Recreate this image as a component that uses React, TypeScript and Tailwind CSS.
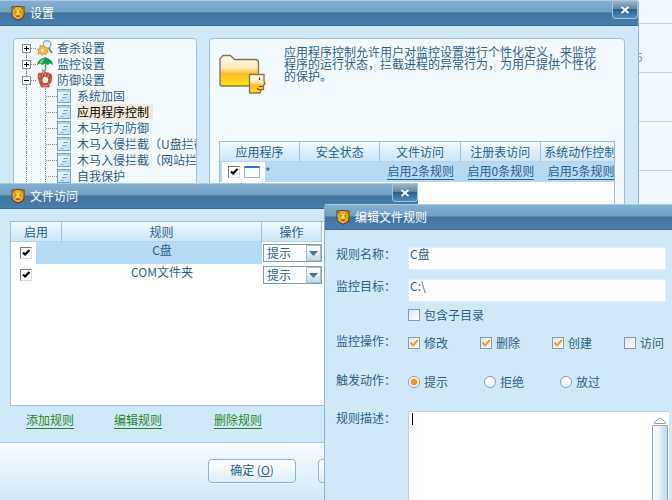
import type { ReactNode } from "react";

const treeGroups = [
  { label: "查杀设置", icon: "scan", open: false },
  { label: "监控设置", icon: "umbrella", open: false },
  { label: "防御设置", icon: "glove", open: true },
];

const defenseItems = [
  "系统加固",
  "应用程序控制",
  "木马行为防御",
  "木马入侵拦截（U盘拦截）",
  "木马入侵拦截（网站拦截）",
  "自我保护",
  "漏洞防护",
];

const appColumns = ["应用程序", "安全状态", "文件访问", "注册表访问", "系统动作控制"];

const fileRules = [
  { id: "c", name: "C盘", selected: true },
  { id: "com", name: "COM文件夹", selected: false },
];

const operations = [
  { label: "修改", checked: true },
  { label: "删除", checked: true },
  { label: "创建", checked: true },
  { label: "访问", checked: false },
];

const actions = ["提示", "拒绝", "放过"];

function Shield() {
  return (
    <svg className="h-4 w-4 shrink-0" viewBox="0 0 16 16" aria-hidden="true">
      <path d="M1.500 1.500Q5 1.800 8 .8Q11 1.800 14.500 1.500V10Q14 13.500 8 15.700Q2 13.500 1.500 10Z" fill="#54422a" />
      <path d="M2.500 2.500Q5.500 2.800 8 1.800Q10.500 2.800 13.500 2.500V9.800Q13 12.700 8 14.600Q3 12.700 2.500 9.800Z" fill="#f5ae1e" />
      <path d="M3 3L5.200 3.500L3.800 5.500ZM13 3L10.800 3.500L12.200 5.500Z" fill="#c2560e" />
      <path d="M4.500 6L6.800 7L5.500 7.800ZM11.500 6L9.200 7L10.500 7.800Z" fill="#8a3c06" />
      <path d="M7 5H9L9.500 9.500H6.500Z" fill="#ffe46e" />
      <path d="M5.500 10.500H10.500L9.500 12H6.500Z" fill="#b04a0a" />
      <path d="M3.200 8.500L4.800 9.500M12.800 8.500L11.200 9.500" stroke="#c2560e" strokeWidth=".8" />
    </svg>
  );
}

function GroupIcon({ name }: { name: string }) {
  if (name === "scan") {
    return (
      <svg className="h-4 w-4 shrink-0" viewBox="0 0 16 16" aria-hidden="true">
        <path d="M11.500 8L15 13" stroke="#5b86b5" strokeWidth="2" />
        <circle cx="10" cy="4.500" r="3.800" fill="#dceffc" stroke="#86a9c9" strokeWidth="1.300" />
        <path d="M3 5.500L5.500 6L7 5.500L8.500 7.500L10.500 8L10 10L11.500 12L9.500 13L8.800 15L6.500 14.300L4.500 15.500L3.500 13.700L.8 14L1.500 11.500L.3 9.500L2.800 8.500Z" fill="#fbb43c" stroke="#e0862a" strokeWidth=".7" />
        <circle cx="5.500" cy="10.500" r="1.800" fill="#ffe9b0" />
      </svg>
    );
  }
  if (name === "umbrella") {
    return (
      <svg className="h-4 w-4 shrink-0" viewBox="0 0 16 16" aria-hidden="true">
        <path d="M8.500 1V13.500Q8.500 15.200 7 15.200Q5.500 15.200 5.500 13.500" fill="none" stroke="#6b8a7c" strokeWidth="1.400" />
        <path d="M0 9Q.5 3 8 1.500Q15.500 3 16 9L13 7.500L10.800 9L8 7.500L5.200 9L3 7.500Z" fill="#159c52" />
        <path d="M5 7.500Q5.500 3.800 8 2.200Q4 3.200 2.300 7Z" fill="#72d89c" />
      </svg>
    );
  }
  return (
    <svg className="h-4 w-4 shrink-0" viewBox="0 0 16 16" aria-hidden="true">
      <path d="M1.200 2Q2.500 .5 4 1.500Q5 0 6.700 1Q8.300 -.3 9.800 1Q11.500 0 12.500 1.800Q14.500 1.500 14.800 3.500L14.500 9Q13.500 11.500 12 12L12.300 15H4.500Q1.800 10 1.200 6Z" fill="#cc5238" stroke="#9a3b28" strokeWidth=".6" />
      <path d="M4 2V7M6.700 1.500V5M9.800 1.500V5M12.500 2.500V6.500" stroke="#8a2f20" strokeWidth=".7" />
      <path d="M3 2.500V6M5.500 1.800V4.500M8.300 1.500V4M11.200 2V5" stroke="#f0a08a" strokeWidth=".8" />
      <ellipse cx="8.300" cy="8" rx="2.800" ry="3.300" fill="#fff8f2" />
      <path d="M5.500 13.700H11.300" stroke="#f0a08a" strokeWidth=".8" />
    </svg>
  );
}

function PageIcon() {
  return (
    <svg className="h-3.5 w-3.5 shrink-0" viewBox="0 0 14 14" aria-hidden="true">
      <rect x=".5" y=".5" width="13" height="13" fill="#e3f2fc" stroke="#6aa8d2" />
      <path d="M1 2H13" stroke="#a5d0ec" strokeWidth="2" />
      <path d="M6.500 5.500H11M5 8.500H9.500" stroke="#5b9cca" />
      <path d="M3 11.500H7" stroke="#8dbde0" />
      <path d="M1 13L13 5V13Z" fill="#a8d2ee" opacity=".5" />
    </svg>
  );
}

function FolderIcon() {
  return (
    <svg className="h-[42px] w-12 shrink-0" viewBox="0 0 48 42" aria-hidden="true">
      <defs>
        <linearGradient id="folder" x1="0" y1="0" x2="0" y2="1">
          <stop offset="0" stopColor="#fffdf6" />
          <stop offset=".4" stopColor="#ffe9b8" />
          <stop offset=".6" stopColor="#fdbb2a" />
          <stop offset="1" stopColor="#ffe60c" />
        </linearGradient>
      </defs>
      <path d="M1 5L4 1.500H11.500L15.500 5.500H36Q39.500 5.500 39.500 9V30Q39.500 32 37.500 32H3Q1 32 1 30Z" fill="url(#folder)" stroke="#85714f" strokeWidth="1.300" />
      <path d="M30.500 20.500H45V27L46 30L44.500 31V35.500H42.500L41 39H30.500Z" fill="url(#folder)" stroke="#85714f" strokeWidth="1.300" />
      <path d="M40.500 23.500V26M43.500 32.500H40M41.500 35.500Q39 36 38 34" fill="none" stroke="#5f3e10" strokeWidth="1.200" />
    </svg>
  );
}

function TitleBar({ title, closable = false }: { title: string; closable?: boolean }) {
  return (
    <header className="flex h-[26px] shrink-0 items-center justify-between border-t border-b border-t-[#a9cae1] border-b-[#356792] bg-[linear-gradient(#82b0d0,#6fa1c5_45%,#42739f_50%,#477fae)] pl-2.5">
      <h2 className="flex items-center gap-1 text-white">
        <Shield />
        {title}
      </h2>
      {closable && (
        <button type="button" aria-label="关闭" className="flex h-[18px] w-[26px] items-center justify-center self-start rounded-b border border-t-0 border-[#9cc4df] bg-[linear-gradient(#9fb5c6,#6386a3_45%,#2d5f8c_50%,#4a90bd)]">
          <svg className="h-2 w-2" viewBox="0 0 8 8" aria-hidden="true">
            <path d="M.5 1L7.500 7M7.500 1L.5 7" stroke="white" strokeWidth="1.800" />
          </svg>
        </button>
      )}
    </header>
  );
}

function TableCheckbox({ label }: { label: string }) {
  return (
    <span className="grid h-3 w-3">
      <input type="checkbox" defaultChecked aria-label={label} className="peer col-start-1 row-start-1 h-3 w-3 appearance-none border border-t-[#777] border-r-[#ddd] border-b-[#ddd] border-l-[#777] bg-white" />
      <svg className="pointer-events-none invisible col-start-1 row-start-1 h-3 w-3 peer-checked:visible" viewBox="0 0 12 12" aria-hidden="true">
        <path d="M3 5.500L5 7.500L9.500 3" fill="none" stroke="black" strokeWidth="2.200" />
      </svg>
    </span>
  );
}

function CheckOption({ label, checked = false }: { label: string; checked?: boolean }) {
  return (
    <label className="flex items-center gap-1">
      <span className="grid h-3 w-3">
        <input type="checkbox" defaultChecked={checked} className="peer col-start-1 row-start-1 h-3 w-3 appearance-none border border-[#7d9cc0] bg-linear-to-br from-[#dfe6ec] to-white" />
        <svg className="pointer-events-none invisible col-start-1 row-start-1 h-3 w-3 peer-checked:visible" viewBox="0 0 12 12" aria-hidden="true">
          <path d="M2.500 5.500L5 8.500L10 3" fill="none" stroke="#f0a020" strokeWidth="2" />
        </svg>
      </span>
      {label}
    </label>
  );
}

function HeadCell({ children, width }: { children?: ReactNode; width: string }) {
  return (
    <th scope="col" className={`${width} h-5 border-r border-b border-r-[#9fc3dd] border-b-[#b4d6ec] bg-[linear-gradient(#f1f9fe,#ddeffb_50%,#cde6f7)] p-0 font-normal whitespace-nowrap`}>
      {children}
    </th>
  );
}

function SettingsWindow() {
  return (
    <section className="absolute top-0 right-[33px] bottom-0 left-0 flex flex-col rounded-t border-r border-[#8fb3cf] bg-[#d1e8f8]">
      <TitleBar title="设置" closable />
      <div className="flex flex-1 gap-3 px-[13px] pt-3">
        <nav className="w-[184px] shrink-0 overflow-hidden rounded-t border border-[#9dbfd9] bg-[#f3fafe] pt-px pl-2">
          <ul>
            {treeGroups.map((group, i) => (
              <li key={group.label} className="flex h-4 items-center">
                <span className="flex h-4 flex-col items-center">
                  <span className={`w-px flex-1 ${i > 0 ? "border-l border-dotted border-[#888]" : ""}`} />
                  <button type="button" aria-label={group.label} aria-expanded={group.open} className="flex h-[9px] w-[9px] items-center justify-center border border-[#8a9199] bg-white">
                    <svg className="h-[5px] w-[5px]" viewBox="0 0 5 5" aria-hidden="true">
                      <path d={group.open ? "M0 2.500H5" : "M0 2.500H5M2.500 0V5"} stroke="black" />
                    </svg>
                  </button>
                  <span className="w-px flex-1 border-l border-dotted border-[#888]" />
                </span>
                <span className="mr-px w-[5px] border-t border-dotted border-[#888]" />
                <GroupIcon name={group.icon} />
                <span className="ml-1 whitespace-nowrap">{group.label}</span>
              </li>
            ))}
            {defenseItems.map((item, i) => (
              <li key={item} className="flex h-4 items-center pl-1">
                <span className="h-4 w-[19px] shrink-0 border-l border-dotted border-[#888]" />
                <span className="flex h-4 w-3 shrink-0 items-center border-l border-dotted border-[#888]">
                  <span className="w-full border-t border-dotted border-[#888]" />
                </span>
                <PageIcon />
                <a href="#" className={`ml-1.5 whitespace-nowrap ${i === 1 ? "bg-[#f2e9d8] pr-1 text-black" : ""}`}>
                  {item}
                </a>
              </li>
            ))}
          </ul>
        </nav>

        <div className="flex min-w-0 flex-1 flex-col rounded-t border border-[#9dbfd9] bg-[#f3fafe] px-[9px] pt-[7px]">
          <div className="flex h-[95px] shrink-0 gap-[17px]">
            <div className="pt-2">
              <FolderIcon />
            </div>
            <p className="flex-1 pr-4 leading-3">
              应用程序控制允许用户对监控设置进行个性化定义，来监控程序的运行状态，拦截进程的异常行为，为用户提供个性化的保护。
            </p>
          </div>
          <div className="flex-1 overflow-hidden border border-[#9dbfd9] bg-white">
            <table className="w-[401px] table-fixed border-separate border-spacing-0">
              <thead>
                <tr>
                  {appColumns.map((column) => (
                    <HeadCell key={column} width="w-20">{column}</HeadCell>
                  ))}
                </tr>
              </thead>
              <tbody>
                <tr className="h-5 bg-[#b5daf3]">
                  <td className="p-0">
                    <div className="flex items-center">
                      <span className="ml-0.5 flex h-5 w-[43px] items-center gap-1 bg-white pl-1.5">
                        <TableCheckbox label="所有程序" />
                        <span className="h-3 w-4 border border-t-2 border-[#8fb5dd] border-t-[#2c74d0] bg-white" />
                      </span>
                      *
                    </div>
                  </td>
                  <td />
                  {["启用2条规则", "启用0条规则", "启用5条规则"].map((rule) => (
                    <td key={rule} className="p-0 pb-0.5 pl-[7px] whitespace-nowrap">
                      <a href="#" className="border-b border-[#2a5f8a]">{rule}</a>
                    </td>
                  ))}
                </tr>
              </tbody>
            </table>
          </div>
        </div>
      </div>
    </section>
  );
}

function FileAccessWindow() {
  return (
    <section className="absolute top-[183px] bottom-0 left-0 flex w-[418px] flex-col rounded-t bg-[#d1e8f8]">
      <TitleBar title="文件访问" closable />
      <div className="flex flex-1 flex-col px-2.5 pt-3">
        <div className="flex-1 border border-[#9dbfd9] bg-white">
          <table className="w-[311px] table-fixed border-separate border-spacing-0">
            <thead>
              <tr>
                <HeadCell width="w-[51px]">启用</HeadCell>
                <HeadCell width="w-[200px]">规则</HeadCell>
                <HeadCell width="w-[60px]">操作</HeadCell>
              </tr>
            </thead>
            <tbody>
              {fileRules.map((rule) => (
                <tr key={rule.id} className="h-[22px]">
                  <td className="p-0">
                    <div className="flex h-[22px]">
                      <span className="flex w-[25px] items-center pl-[9px]">
                        <TableCheckbox label={rule.name} />
                      </span>
                      <span className={`flex-1 ${rule.selected ? "bg-[#b5daf3]" : ""}`} />
                    </div>
                  </td>
                  <td className={`p-0 pb-1.5 text-center ${rule.selected ? "bg-[#b5daf3]" : ""}`}>{rule.name}</td>
                  <td className="p-0 pl-px">
                    <div className="grid h-[18px]">
                      <select aria-label={`${rule.name}操作`} className="col-start-1 row-start-1 h-[18px] w-full appearance-none border border-[#7f9db9] bg-white pl-[3px]">
                        <option>提示</option>
                        <option>拒绝</option>
                        <option>放过</option>
                      </select>
                      <span className="pointer-events-none col-start-1 row-start-1 mr-px flex h-4 w-[15px] items-center justify-center self-center justify-self-end border border-[#a8bfd5] bg-linear-to-b from-white to-[#c3d9ee]">
                        <svg className="h-[5px] w-[9px]" viewBox="0 0 9 5" aria-hidden="true">
                          <path d="M0 0H9L4.500 5Z" fill="#4a6f99" />
                        </svg>
                      </span>
                    </div>
                  </td>
                </tr>
              ))}
            </tbody>
          </table>
        </div>
        <div className="flex h-9 items-start gap-10 pt-1.5 pl-4 text-[#1f8a1f]">
          <a href="#" className="border-b border-[#1f8a1f]">添加规则</a>
          <a href="#" className="border-b border-[#1f8a1f]">编辑规则</a>
          <a href="#" className="ml-3 border-b border-[#1f8a1f]">删除规则</a>
        </div>
      </div>
      <footer className="flex h-[58px] shrink-0 items-start justify-end gap-[22px] border-t border-[#a9c9df] bg-linear-to-b from-[#f7fcff] to-[#d1e8f8] pt-4 pr-3">
        <button type="button" className="h-6 w-[88px] rounded-sm border border-[#8fb3d0] bg-linear-to-b from-white to-[#dcedf9] pb-0.5 shadow-[0_0_0_1px_#e6f3fc]">
          确定 (<u>O</u>)
        </button>
        <button type="button" className="h-6 w-[88px] rounded-sm border border-[#8fb3d0] bg-linear-to-b from-white to-[#dcedf9] pb-0.5 shadow-[0_0_0_1px_#e6f3fc]">
          取消 (<u>C</u>)
        </button>
      </footer>
    </section>
  );
}

function EditRuleWindow() {
  return (
    <section className="absolute top-[204px] right-0 bottom-0 left-[324px] flex flex-col rounded-tl border-l border-[#8fb3cf] bg-[#d1e8f8]">
      <TitleBar title="编辑文件规则" />
      <form className="flex flex-1 flex-col pt-[17px] pl-[11px] leading-[14px]">
        <div className="flex h-[23px] pr-1.5">
          <label htmlFor="rule-name" className="w-[72px] shrink-0">规则名称：</label>
          <input id="rule-name" defaultValue="C盘" className="min-w-0 flex-1 border border-[#e3edf4] bg-white pb-[9px] pl-px" />
        </div>
        <div className="mt-[9px] flex h-[23px] pr-1.5">
          <label htmlFor="rule-target" className="w-[72px] shrink-0">监控目标：</label>
          <input id="rule-target" defaultValue="C:\" className="min-w-0 flex-1 border border-[#e3edf4] bg-white pb-[9px] pl-px" />
        </div>
        <div className="mt-1.5 flex pl-[72px]">
          <CheckOption label="包含子目录" />
        </div>
        <fieldset className="mt-3 flex h-[18px]">
          <legend className="float-left w-[72px] shrink-0">监控操作：</legend>
          <div className="flex h-[18px] items-center gap-8">
            {operations.map((op) => (
              <CheckOption key={op.label} label={op.label} checked={op.checked} />
            ))}
          </div>
        </fieldset>
        <fieldset className="mt-[21px] flex h-[18px]">
          <legend className="float-left w-[72px] shrink-0">触发动作：</legend>
          <div className="flex h-[18px] items-center gap-9">
            {actions.map((action, i) => (
              <label key={action} className="flex items-center gap-1">
                <input type="radio" name="action" defaultChecked={i === 0} className="h-3 w-3 appearance-none rounded-full border border-[#7d9cc0] bg-white checked:bg-[radial-gradient(circle,#f29a1c_3px,white_4px)]" />
                {action}
              </label>
            ))}
          </div>
        </fieldset>
        <div className="mt-5 flex flex-1 pr-[3px]">
          <label htmlFor="rule-desc" className="w-[72px] shrink-0">规则描述：</label>
          <div className="flex min-w-0 flex-1 border-t border-l border-[#bcd2e2] bg-white">
            <span className="mt-px ml-[3px] h-3 w-px bg-black" />
            <textarea id="rule-desc" className="min-w-0 flex-1 resize-none outline-none" />
            <div className="flex w-[17px] flex-col items-center pt-[5px] pr-px">
              <svg className="h-[7px] w-3 shrink-0" viewBox="0 0 12 7" aria-hidden="true">
                <path d="M.7 6.500V5L6 .8L11.300 5V6.500Z" fill="white" stroke="#8c9fb3" />
              </svg>
              <span className="mt-px w-full flex-1 rounded-t-xs border border-b-0 border-[#8ca6bd] bg-linear-to-r from-white via-[#e2f2fc] to-[#b3d8ef]" />
            </div>
          </div>
        </div>
      </form>
    </section>
  );
}

export default function App() {
  return (
    <main className="relative h-screen overflow-hidden bg-[#f1f8fd] font-['Noto_Sans_CJK_SC',sans-serif] text-[12px] leading-4 text-[#2a5f8a]">
      <div className="flex flex-col items-end">
        {[0, 1, 2, 3].map((row) => (
          <div key={row} className={`w-9 border-b border-[#c0d2e2] text-[#8a949c] ${row === 0 ? "h-6" : "h-[49px] pt-[25px]"}`}>
            {row === 1 && "5"}
          </div>
        ))}
      </div>
      <SettingsWindow />
      <FileAccessWindow />
      <EditRuleWindow />
    </main>
  );
}
